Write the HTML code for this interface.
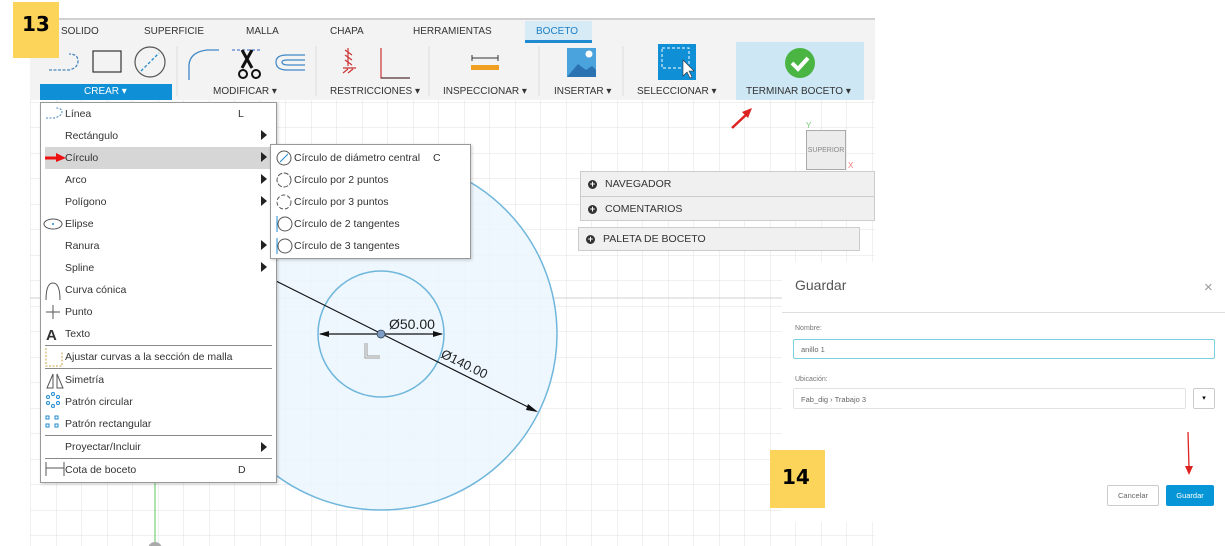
<!DOCTYPE html>
<html><head><meta charset="utf-8"><style>
*{margin:0;padding:0;box-sizing:border-box}
body{width:1225px;height:546px;overflow:hidden;background:#fff;font-family:"Liberation Sans",sans-serif;position:relative}
.a{position:absolute}
.t{font-size:10px;color:#333;white-space:nowrap}
.mi{position:absolute;left:65px;font-size:10.5px;color:#333;white-space:nowrap}
.tri{position:absolute;left:261px;width:0;height:0;border-left:6px solid #222;border-top:5px solid transparent;border-bottom:5px solid transparent}
.sep{position:absolute;left:45px;width:227px;height:1px;background:#888}
.si{position:absolute;left:294px;font-size:10.5px;color:#333;white-space:nowrap}
</style></head><body>
<svg class="a" style="left:0;top:0" width="1225" height="546">
<defs>
<pattern id="g" x="5" y="0" width="25.5" height="25.5" patternUnits="userSpaceOnUse">
<path d="M0 0V25.5M0 0H25.5" stroke="#e0e0e0" stroke-width="1" fill="none"/>
</pattern>
</defs>
<rect x="30" y="100" width="845" height="446" fill="url(#g)"/>
<line x1="30" y1="298" x2="875" y2="298" stroke="#d0d0d0"/>
<line x1="155" y1="483" x2="155" y2="546" stroke="#5cc45c"/>
<circle cx="155" cy="549" r="7" fill="#aaa"/>
<circle cx="381" cy="334" r="176" fill="#eaf6fd" fill-opacity=".85" stroke="#6fb6dc" stroke-width="1.5"/>
<circle cx="381" cy="334" r="63" fill="none" stroke="#6fb6dc" stroke-width="1.5"/>
<line x1="276" y1="281" x2="536" y2="411" stroke="#111" stroke-width="1.2"/>
<polygon points="538,412 528,404 526,410" fill="#111"/>
<line x1="320" y1="334" x2="442" y2="334" stroke="#111" stroke-width="1.2"/>
<polygon points="319,334 329,331 329,337" fill="#111"/>
<polygon points="443,334 433,331 433,337" fill="#111"/>
<circle cx="381" cy="334" r="4" fill="#7f9cc4" stroke="#345" stroke-width=".8"/>
<path d="M366 343V357H380" stroke="#999" stroke-width="3" fill="none"/>
<path d="M366 343V357H380" stroke="#fff" stroke-width="1" fill="none"/>
<text x="389" y="329" font-family="Liberation Sans" font-size="14" fill="#222">Ø50.00</text>
<text x="440" y="357" font-family="Liberation Sans" font-size="13" fill="#222" transform="rotate(26 440 357)">Ø140.00</text>
<line x1="732" y1="128" x2="748" y2="113" stroke="#d22" stroke-width="2.5"/>
<polygon points="752,108 742,112 748,118" fill="#d22"/>
</svg>
<div class="a" style="left:782px;top:262px;width:443px;height:260px;background:#fff"></div>
<!-- toolbar -->
<div class="a" style="left:30px;top:18px;width:845px;height:82px;background:#f3f3f3;border-top:2px solid #d0d0d0"></div>
<div class="a" style="left:525px;top:21px;width:67px;height:22px;background:#d7ebf7;border-bottom:3px solid #1f8ad0"></div>
<div class="a t" style="left:61px;top:26px">SOLIDO</div>
<div class="a t" style="left:144px;top:26px">SUPERFICIE</div>
<div class="a t" style="left:246px;top:26px">MALLA</div>
<div class="a t" style="left:330px;top:26px">CHAPA</div>
<div class="a t" style="left:413px;top:26px">HERRAMIENTAS</div>
<div class="a t" style="left:536px;top:26px;color:#1a7fc5">BOCETO</div>
<div class="a" style="left:736px;top:42px;width:128px;height:58px;background:#cde7f5"></div>
<div class="a" style="left:40px;top:84px;width:132px;height:16px;background:#0f8fd6"></div>
<div class="a t" style="left:84px;top:86px;color:#fff">CREAR ▾</div>
<div class="a t" style="left:213px;top:86px">MODIFICAR ▾</div>
<div class="a t" style="left:330px;top:86px">RESTRICCIONES ▾</div>
<div class="a t" style="left:443px;top:86px">INSPECCIONAR ▾</div>
<div class="a t" style="left:554px;top:86px">INSERTAR ▾</div>
<div class="a t" style="left:637px;top:86px">SELECCIONAR ▾</div>
<div class="a t" style="left:746px;top:86px">TERMINAR BOCETO ▾</div>
<svg class="a" style="left:0;top:0" width="875" height="100">
<g stroke="#ddd"><line x1="177" y1="46" x2="177" y2="96"/><line x1="316" y1="46" x2="316" y2="96"/><line x1="429" y1="46" x2="429" y2="96"/><line x1="539" y1="46" x2="539" y2="96"/><line x1="623" y1="46" x2="623" y2="96"/></g>
<path d="M49 70H69Q78 68 78 61Q78 54 69 54" stroke="#4a87bd" stroke-width="1.3" fill="none" stroke-dasharray="3 1.5"/>
<rect x="93" y="51" width="28" height="21" stroke="#333" fill="none" stroke-width="1.2"/>
<circle cx="150" cy="62" r="15" stroke="#555" fill="none" stroke-width="1.2"/>
<line x1="141" y1="71" x2="159" y2="53" stroke="#1f8ad0" stroke-width="1.3" stroke-dasharray="3 2"/>
<path d="M189 80V65Q190 52 207 50H219" stroke="#3f87c7" stroke-width="1.3" fill="none"/>
<path d="M232 50H262" stroke="#36c" stroke-dasharray="3 2"/>
<path d="M242 50L252 68M252 50L242 68" stroke="#111" stroke-width="3"/>
<circle cx="243" cy="74" r="4" stroke="#111" stroke-width="2" fill="none"/><circle cx="256" cy="74" r="4" stroke="#111" stroke-width="2" fill="none"/>
<path d="M305 55H287Q276 55 276 62Q276 70 287 70H305M305 60H288Q282 60 282 62Q282 65 288 65H305" stroke="#3f87c7" stroke-width="1.2" fill="none"/>
<path d="M345 50L352 55M345 55L352 60M345 60L352 65M348 48V66M343 68H356M343 73L348 69M348 73L353 69" stroke="#c33" stroke-width="1.2" fill="none"/>
<path d="M381 48V78H410" stroke="#c33" stroke-width="1.2" fill="none"/><path d="M381 78H410" stroke="#333"/>
<path d="M472 58H498M472 55V61M498 55V61" stroke="#333" fill="none"/>
<rect x="471" y="65" width="28" height="5" fill="#f0a020"/>
<rect x="567" y="48" width="29" height="29" fill="#4aa3dc"/><path d="M567 77L578 64L586 70L592 66L596 70V77Z" fill="#2a72b0"/><circle cx="589" cy="54" r="3.5" fill="#fff"/>
<rect x="658" y="44" width="38" height="36" fill="#0f8fd6"/><rect x="662" y="48" width="27" height="20" stroke="#fff" stroke-dasharray="3 2" fill="none"/>
<path d="M683 60V76L687 72L690 78L692 77L689 71L694 71Z" fill="#fff" stroke="#333" stroke-width=".6"/>
<circle cx="800" cy="63" r="15" fill="#4ab542"/><path d="M792 63L798 69L808 58" stroke="#fff" stroke-width="4" fill="none"/>
</svg>
<div class="a" style="left:13px;top:2px;width:46px;height:56px;background:#fcd45a;font-family:'DejaVu Sans';font-weight:bold;font-size:20px;padding:10px 0 0 9px">13</div>
<!-- viewcube -->
<div class="a" style="left:806px;top:130px;width:40px;height:40px;background:#ececec;border:1px solid #aaa;font-size:7px;color:#888;text-align:center;line-height:40px">SUPERIOR</div>
<div class="a" style="left:806px;top:121px;font-size:8px;color:#7c7">Y</div>
<div class="a" style="left:848px;top:161px;font-size:8px;color:#e77">X</div>
<!-- panels -->
<div class="a" style="left:580px;top:171px;width:295px;height:50px;background:#f0f0f0;border:1px solid #ccc"></div>
<div class="a" style="left:580px;top:196px;width:295px;height:1px;background:#ccc"></div>
<div class="a" style="left:578px;top:227px;width:282px;height:24px;background:#f0f0f0;border:1px solid #ccc"></div>
<div class="a t" style="left:588px;top:178px;font-size:10.5px"><b style="display:inline-block;width:9px;height:9px;border-radius:50%;background:#333;color:#fff;font-size:9px;line-height:8px;text-align:center;margin-right:8px">+</b>NAVEGADOR</div>
<div class="a t" style="left:588px;top:203px;font-size:10.5px"><b style="display:inline-block;width:9px;height:9px;border-radius:50%;background:#333;color:#fff;font-size:9px;line-height:8px;text-align:center;margin-right:8px">+</b>COMENTARIOS</div>
<div class="a t" style="left:586px;top:233px;font-size:10.5px"><b style="display:inline-block;width:9px;height:9px;border-radius:50%;background:#333;color:#fff;font-size:9px;line-height:8px;text-align:center;margin-right:8px">+</b>PALETA DE BOCETO</div>
<!-- menu -->
<div class="a" style="left:40px;top:102px;width:237px;height:381px;background:#fff;border:1px solid #999;box-shadow:1px 1px 3px rgba(0,0,0,.2)"></div>
<div class="a" style="left:45px;top:147px;width:225px;height:22px;background:#d6d6d6"></div>
<div class="mi" style="top:108px">Línea</div><div class="mi" style="left:238px;top:108px">L</div>
<div class="mi" style="top:130px">Rectángulo</div><div class="tri" style="top:130px"></div>
<div class="mi" style="top:152px">Círculo</div><div class="tri" style="top:152px"></div>
<div class="mi" style="top:174px">Arco</div><div class="tri" style="top:174px"></div>
<div class="mi" style="top:196px">Polígono</div><div class="tri" style="top:196px"></div>
<div class="mi" style="top:218px">Elipse</div>
<div class="mi" style="top:240px">Ranura</div><div class="tri" style="top:240px"></div>
<div class="mi" style="top:262px">Spline</div><div class="tri" style="top:262px"></div>
<div class="mi" style="top:284px">Curva cónica</div>
<div class="mi" style="top:306px">Punto</div>
<div class="mi" style="top:328px">Texto</div>
<div class="sep" style="top:345px"></div>
<div class="mi" style="top:351px">Ajustar curvas a la sección de malla</div>
<div class="sep" style="top:368px"></div>
<div class="mi" style="top:374px">Simetría</div>
<div class="mi" style="top:396px">Patrón circular</div>
<div class="mi" style="top:418px">Patrón rectangular</div>
<div class="sep" style="top:435px"></div>
<div class="mi" style="top:441px">Proyectar/Incluir</div><div class="tri" style="top:442px"></div>
<div class="sep" style="top:458px"></div>
<div class="mi" style="top:464px">Cota de boceto</div><div class="mi" style="left:238px;top:464px">D</div>
<svg class="a" style="left:40px;top:100px" width="30" height="380">
<path d="M6 18H14Q22 16 22 12Q22 8 16 8" stroke="#4a87bd" stroke-dasharray="2 1.5" fill="none"/>
<path d="M5 58H18" stroke="#e11" stroke-width="3"/><polygon points="16,53 26,58 16,62" fill="#e11"/>
<ellipse cx="13" cy="124" rx="9" ry="5" stroke="#555" fill="none"/><circle cx="13" cy="124" r="1" fill="#1f8ad0"/>
<path d="M6 200Q6 183 13 183Q20 183 20 200" stroke="#555" fill="none"/>
<path d="M6 212H20M13 205V219" stroke="#555"/>
<text x="6" y="240" font-family="Liberation Sans" font-weight="bold" font-size="15" fill="#333">A</text>
<path d="M6 248V266H22V252" stroke="#c9a44b" stroke-dasharray="2 1.5" fill="none"/>
<path d="M7 288L13 274V288ZM17 288V274L23 288Z" stroke="#555" fill="none"/>
<g fill="none" stroke="#1f8ad0"><circle cx="8" cy="297" r="1.5"/><circle cx="13" cy="294" r="1.5"/><circle cx="18" cy="297" r="1.5"/><circle cx="8" cy="303" r="1.5"/><circle cx="18" cy="303" r="1.5"/><circle cx="13" cy="306" r="1.5"/>
<rect x="6" y="316" width="3" height="3"/><rect x="15" y="316" width="3" height="3"/><rect x="6" y="324" width="3" height="3"/><rect x="15" y="324" width="3" height="3"/></g>
<path d="M6 362V376M6 368H24M24 362V376" stroke="#555" fill="none"/>
</svg>
<!-- submenu -->
<div class="a" style="left:270px;top:144px;width:201px;height:115px;background:#fff;border:1px solid #999;box-shadow:1px 1px 3px rgba(0,0,0,.2)"></div>
<div class="si" style="top:152px">Círculo de diámetro central</div><div class="si" style="left:433px;top:152px">C</div>
<div class="si" style="top:174px">Círculo por 2 puntos</div>
<div class="si" style="top:196px">Círculo por 3 puntos</div>
<div class="si" style="top:218px">Círculo de 2 tangentes</div>
<div class="si" style="top:240px">Círculo de 3 tangentes</div>
<svg class="a" style="left:272px;top:146px" width="22" height="112">
<g fill="none" stroke="#555"><circle cx="12" cy="12" r="7"/><circle cx="12" cy="34" r="7" stroke-dasharray="5 1.5"/><circle cx="12" cy="56" r="7" stroke-dasharray="4 2"/><circle cx="13" cy="78" r="7"/><circle cx="13" cy="100" r="7"/></g>
<line x1="8" y1="16" x2="16" y2="8" stroke="#1f8ad0"/>
<path d="M5 70V86M5 92V108" stroke="#1f8ad0"/>
</svg>
<!-- dialog -->
<div class="a" style="left:795px;top:277px;font-size:14px;color:#555">Guardar</div>
<div class="a" style="left:1204px;top:279px;font-size:15px;color:#999">×</div>
<div class="a" style="left:782px;top:312px;width:443px;height:1px;background:#ddd"></div>
<div class="a" style="left:795px;top:325px;font-size:7px;color:#777">Nombre:</div>
<div class="a" style="left:793px;top:339px;width:422px;height:20px;border:1px solid #7ccfe0;border-radius:2px;font-size:7.5px;color:#666;padding:5px 0 0 7px">anillo 1</div>
<div class="a" style="left:795px;top:376px;font-size:7px;color:#777">Ubicación:</div>
<div class="a" style="left:793px;top:388px;width:393px;height:21px;border:1px solid #e2e2e2;border-radius:2px;font-size:7.5px;color:#666;padding:6px 0 0 7px">Fab_dig › Trabajo 3</div>
<div class="a" style="left:1193px;top:388px;width:22px;height:21px;border:1px solid #ccc;border-radius:2px;font-size:7px;text-align:center;line-height:19px">▾</div>
<div class="a" style="left:1107px;top:485px;width:52px;height:21px;border:1px solid #ccc;border-radius:2px;font-size:7.5px;color:#666;text-align:center;line-height:19px">Cancelar</div>
<div class="a" style="left:1166px;top:485px;width:48px;height:21px;background:#0696d7;border-radius:2px;font-size:7.5px;color:#fff;text-align:center;line-height:21px">Guardar</div>
<svg class="a" style="left:1180px;top:430px" width="20" height="50"><line x1="8" y1="2" x2="9" y2="38" stroke="#d22" stroke-width="1.3"/><polygon points="5,36 13,36 9,45" fill="#d22"/></svg>
<div class="a" style="left:770px;top:450px;width:55px;height:58px;background:#fcd45a;font-family:'DejaVu Sans';font-weight:bold;font-size:20px;padding:15px 0 0 12px">14</div>
</body></html>
